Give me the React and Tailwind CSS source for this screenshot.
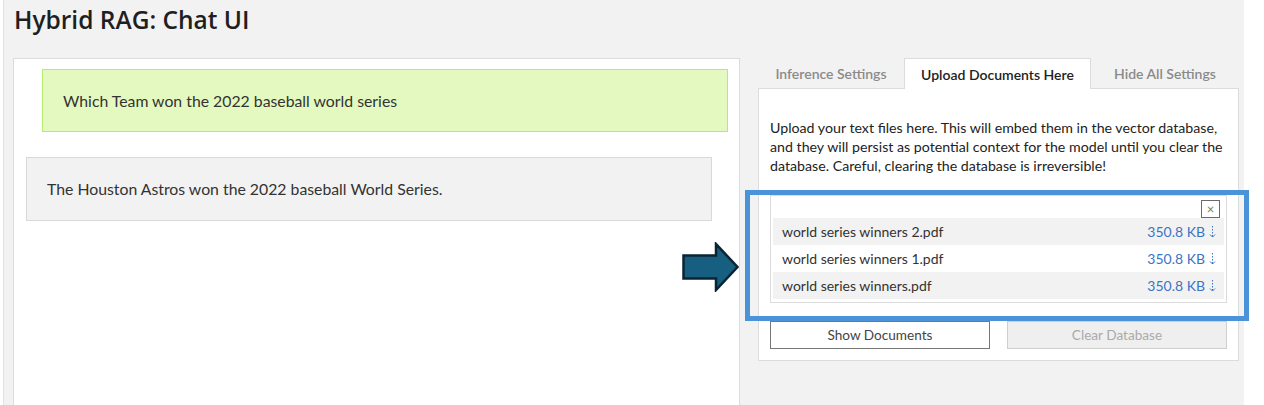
import React from 'react';

const files = [
  { name: 'world series winners 2.pdf', size: '350.8 KB' },
  { name: 'world series winners 1.pdf', size: '350.8 KB' },
  { name: 'world series winners.pdf', size: '350.8 KB' },
];

function DownloadIcon() {
  return (
    <svg width="7" height="12" viewBox="0 0 7 12" className="ml-[4px]">
      <path d="M3.5 0v1.5M3.5 3v1.5M3.5 6v1.5M3.5 9v2" stroke="#3b74c4" strokeWidth="1" />
      <path d="M1 8.5l2.5 2.5 2.5-2.5" stroke="#3b74c4" strokeWidth="1" fill="none" />
    </svg>
  );
}

function Tabs() {
  return (
    <div className="flex h-[30px] items-stretch text-[14px] font-semibold">
      <div className="w-[146px] flex items-center justify-center text-[#8a8a8a]">Inference Settings</div>
      <div className="w-[187px] flex items-center justify-center bg-white border border-b-0 border-[#dcdcdc] text-[#222] relative z-10 -mb-px">
        Upload Documents Here
      </div>
      <div className="flex-1 flex items-center justify-center text-[#8a8a8a]">Hide All Settings</div>
    </div>
  );
}

export default function App() {
  return (
    <div className="bg-white w-[1264px] h-[405px] overflow-hidden" style={{ fontFamily: 'Lato, "Open Sans", sans-serif' }}>
      <div className="relative w-[1241px] h-[405px] ml-[3px] bg-[#f2f2f2] border-l border-[#e2e2e2] pl-[9px]">
        <h1
          className="pt-[3px] pl-[1px] h-[58px] text-[24.5px] font-semibold text-[#1f1f1f] leading-[34px]"
          style={{ fontFamily: '"Open Sans", sans-serif' }}
        >
          Hybrid RAG: Chat UI
        </h1>

        <div className="flex gap-[18px] items-start">
          {/* chat history */}
          <div className="w-[727px] h-[360px] bg-white border border-[#dcdcdc] pt-[10px]">
            <div className="ml-[28px] mr-[11px] h-[63px] flex items-center pl-[20px] bg-[#e4f9bf] border border-[#b6ec6e] text-[15.8px] text-[#333]">
              Which Team won the 2022 baseball world series
            </div>
            <div className="mt-[25px] ml-[12px] mr-[27px] h-[64px] flex items-center pl-[20px] bg-[#f2f2f2] border border-[#d9d9d9] text-[15.8px] text-[#333]">
              The Houston Astros won the 2022 baseball World Series.
            </div>
          </div>

          {/* settings */}
          <div className="w-[481px]">
            <Tabs />
            <div className="bg-white border border-[#dcdcdc] h-[273px] pl-[11px] pr-[11px] pt-[29px]">
              <p className="text-[14.2px] leading-[19px] text-[#222] -mr-[6px]">
                Upload your text files here. This will embed them in the vector database, and they will persist as potential context for the model until you clear the database. Careful, clearing the database is irreversible!
              </p>
              <div className="mt-[20px] h-[108px] border border-[#dcdcdc] px-[2px]">
                <div className="flex justify-end pt-[4px] pr-[4px] h-[22px]">
                  <div className="w-[19px] h-[18px] border border-[#6b6b6b] bg-white flex items-center justify-center text-[13px] leading-none text-[#7a7a50]">
                    ×
                  </div>
                </div>
                {files.map((f, i) => (
                  <div
                    key={f.name}
                    className={`h-[27px] flex items-center justify-between pl-[9px] pr-[8px] text-[14px] ${i % 2 === 0 ? 'bg-[#f2f2f2]' : 'bg-white'}`}
                  >
                    <span className="text-[#333]">{f.name}</span>
                    <span className="flex items-center text-[#3b74c4]">
                      {f.size}
                      <DownloadIcon />
                    </span>
                  </div>
                ))}
              </div>
              <div className="mt-[18px] flex gap-[17px]">
                <button className="w-[220px] h-[28px] border border-[#777] bg-white text-[13.6px] text-[#444]">
                  Show Documents
                </button>
                <button className="w-[220px] h-[28px] border border-[#cfcfcf] bg-[#efefef] text-[13.6px] text-[#aaa]">
                  Clear Database
                </button>
              </div>
            </div>
          </div>
        </div>

        {/* annotation overlays */}
        <div className="absolute left-[741px] top-[190px] w-[504px] h-[131px] border-[5px] border-[#4b93d8] pointer-events-none" />
        <svg className="absolute left-[678px] top-[242px]" width="58" height="50" viewBox="0 0 58 50">
          <path d="M1.5 13.5H34V2l21.5 23L34 48V36.5H1.5Z" fill="#175f80" stroke="#0a2434" strokeWidth="2.5" strokeLinejoin="miter" />
        </svg>
      </div>
    </div>
  );
}
